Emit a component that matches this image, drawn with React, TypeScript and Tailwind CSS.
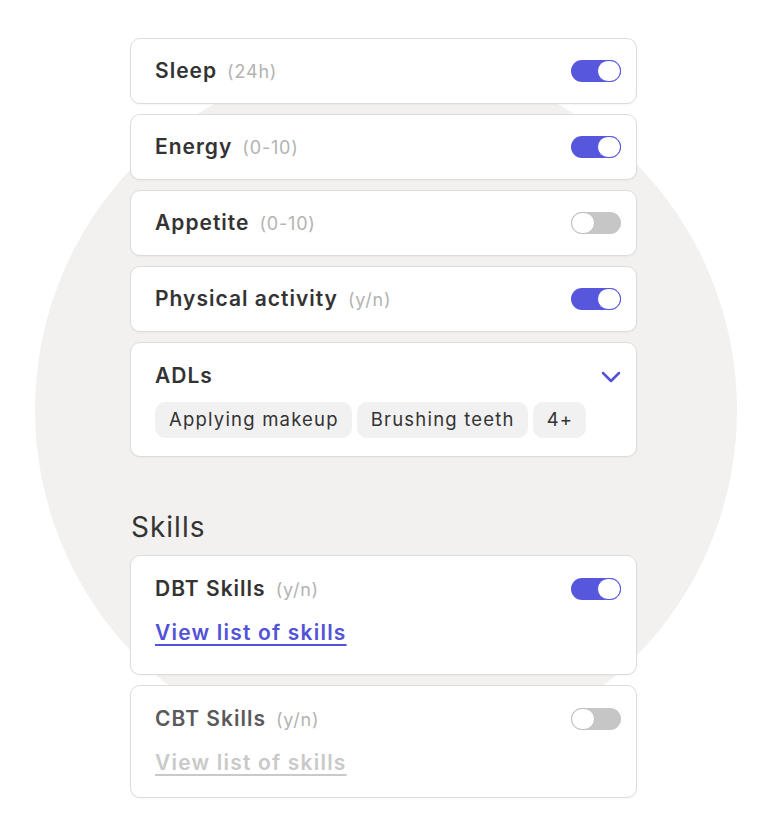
import React from "react";

const font = { fontFamily: "Inter, 'Noto Sans', sans-serif" };

function Toggle({ on }: { on: boolean }) {
  return (
    <div
      className={`relative w-[50px] h-[22px] rounded-full ${on ? "bg-[#5657dc]" : "bg-[#c6c6c6]"}`}
    >
      <div
        className={`absolute top-0 w-[24px] h-[22px] rounded-full bg-white border-[1.5px] ${
          on ? "right-0 border-[#5657dc]" : "left-0 border-[#c0c0c0]"
        }`}
      />
    </div>
  );
}

function Title({ name, hint, muted }: { name: string; hint: string; muted?: boolean }) {
  return (
    <div className="flex items-baseline gap-[10px]">
      <span className={`text-[21px] font-semibold tracking-[1px] ${muted ? "text-[#5a5a5a]" : "text-[#333333]"}`}>
        {name}
      </span>
      <span className="text-[18px] text-[#b3b3b3] tracking-[0.8px]">{hint}</span>
    </div>
  );
}

function Row({ name, hint, on }: { name: string; hint: string; on: boolean }) {
  return (
    <div className="h-[66px] flex items-center justify-between pl-[24px] pr-[15px] bg-white border border-[#dcdcdc] rounded-[10px] shadow-[0_1px_2px_rgba(0,0,0,0.04)]">
      <Title name={name} hint={hint} />
      <Toggle on={on} />
    </div>
  );
}

function Chip({ label }: { label: string }) {
  return (
    <div className="h-[36px] pl-[14px] pr-[13px] flex items-center rounded-[10px] bg-[#f1f1f1] text-[18.5px] text-[#333333] tracking-[1.2px]">
      {label}
    </div>
  );
}

function SkillCard({ name, on }: { name: string; on: boolean }) {
  return (
    <div
      className={`bg-white border border-[#dcdcdc] rounded-[10px] pl-[24px] pr-[15px] pt-[20px] shadow-[0_1px_2px_rgba(0,0,0,0.04)] ${
        on ? "pb-[28px]" : "pb-[21px]"
      }`}
    >
      <div className="flex items-center justify-between h-[26px]">
        <Title name={name} hint="(y/n)" muted={!on} />
        <Toggle on={on} />
      </div>
      <div className="mt-[18px] h-[26px] flex items-center">
        <span
          className={`text-[21px] font-semibold tracking-[1.2px] underline underline-offset-[4px] decoration-[1.5px] ${
            on ? "text-[#5253d6]" : "text-[#c9c9c9]"
          }`}
        >
          View list of skills
        </span>
      </div>
    </div>
  );
}

export default function App() {
  return (
    <div className="relative w-[766px] h-[835px] bg-white overflow-hidden" style={font}>
      <div className="absolute left-[35px] top-[59px] w-[702px] h-[702px] rounded-full bg-[#f2f1f0]" />
      <div className="relative ml-[130px] w-[507px] pt-[38px] flex flex-col gap-[10px]">
        <Row name="Sleep" hint="(24h)" on={true} />
        <Row name="Energy" hint="(0-10)" on={true} />
        <Row name="Appetite" hint="(0-10)" on={false} />
        <Row name="Physical activity" hint="(y/n)" on={true} />
        <div className="bg-white border border-[#dcdcdc] rounded-[10px] pl-[24px] pr-[15px] pt-[20px] pb-[18px] shadow-[0_1px_2px_rgba(0,0,0,0.04)]">
          <div className="flex items-center justify-between h-[26px]">
            <span className="text-[21px] font-semibold text-[#333333] tracking-[1px]">ADLs</span>
            <svg width="20" height="12" viewBox="0 0 20 12" fill="none" stroke="#5253d6" strokeWidth="2.5" strokeLinecap="round" strokeLinejoin="round" className="mt-[2px]">
              <path d="M2 2l8 8 8-8" />
            </svg>
          </div>
          <div className="mt-[13px] flex gap-[5px]">
            <Chip label="Applying makeup" />
            <Chip label="Brushing teeth" />
            <Chip label="4+" />
          </div>
        </div>
        <div className="mt-[42px] h-[36px] flex items-center text-[28px] tracking-[1px] text-[#333333] pl-[1px]">Skills</div>
        <SkillCard name="DBT Skills" on={true} />
        <SkillCard name="CBT Skills" on={false} />
      </div>
    </div>
  );
}
